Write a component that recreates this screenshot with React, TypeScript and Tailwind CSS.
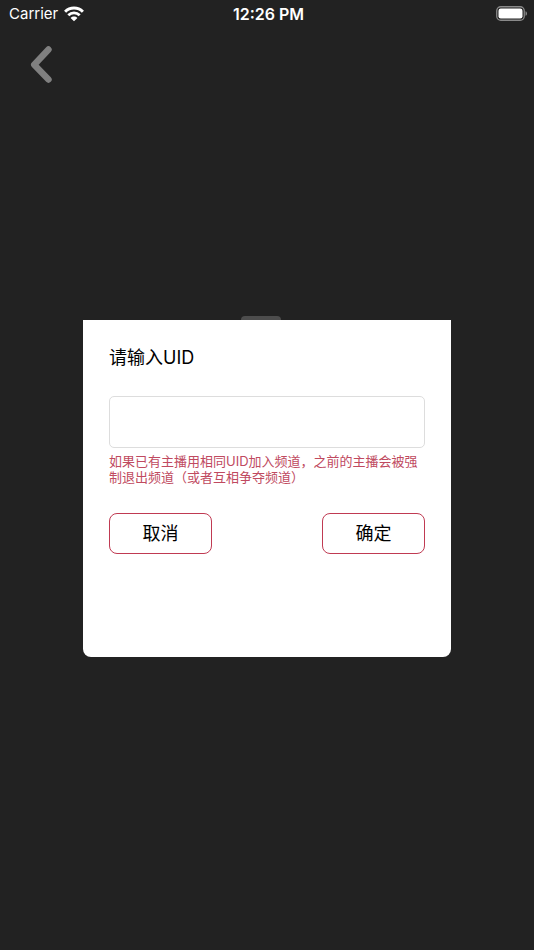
import React from "react";

function WifiIcon() {
  return (
    <svg width="20" height="17" viewBox="0 0 20 17" fill="none" stroke="#fff" aria-hidden="true">
      <path d="M1.100 5.700C6 .9 14 .9 18.900 5.700" strokeWidth="3" />
      <path d="M4.300 9.200c3.200-3.100 8.200-3.100 11.400 0" strokeWidth="2.800" />
      <path d="M10 15.200 6.600 11.900c1.900-1.800 4.900-1.800 6.800 0Z" fill="#fff" stroke="none" />
    </svg>
  );
}

function BatteryIcon() {
  return (
    <svg width="32" height="17" viewBox="0 0 32 17" fill="none" aria-hidden="true">
      <rect x="0.750" y="0.750" width="27.500" height="13.500" rx="4" stroke="#8a8a8a" strokeWidth="1.300" />
      <rect x="2.500" y="2.500" width="24" height="10" rx="2.200" fill="#fff" />
      <path d="M29.500 5.200c2 .6 2 4 0 4.600Z" fill="#8a8a8a" />
    </svg>
  );
}

function StatusBar() {
  return (
    <div className="grid h-7 grid-cols-3 items-center pr-[6px] pl-[9px] text-[15px] leading-5 text-white">
      <div className="flex items-center gap-[6px]">
        <span>Carrier</span>
        <WifiIcon />
      </div>
      <time className="text-center text-base leading-5 font-semibold">12:26 PM</time>
      <div className="flex justify-end">
        <BatteryIcon />
      </div>
    </div>
  );
}

function DialogButton({ children, type }: { children: React.ReactNode; type: "button" | "submit" }) {
  return (
    <button
      type={type}
      className="h-[41px] w-[103px] rounded-lg border border-[#c03a52] bg-white text-lg leading-6 text-black"
    >
      {children}
    </button>
  );
}

export default function App() {
  return (
    <div
      lang="zh-CN"
      className="flex min-h-screen flex-col bg-[#222222] font-[Inter,'Noto_Sans_CJK_SC',sans-serif]"
    >
      <StatusBar />
      <header className="px-[30px] pt-[17px]">
        <button type="button" aria-label="返回" className="block">
          <svg width="23" height="39" viewBox="0 0 23 39" fill="none" aria-hidden="true">
            <path
              d="M18.500 4.500 4.200 19.800 18.500 34.500"
              stroke="#808080"
              strokeWidth="6.400"
              strokeLinecap="round"
              strokeLinejoin="round"
            />
          </svg>
        </button>
      </header>
      <main className="px-[83px] pt-[232px]">
        <div className="flex justify-center pr-3">
          <div className="h-1 w-10 rounded-t-md bg-[#4d4d4d]" />
        </div>
        <form
          role="dialog"
          aria-labelledby="uid-label"
          onSubmit={(event) => event.preventDefault()}
          className="rounded-b-lg bg-white px-[26px] pt-[26px] pb-[103px] text-black"
        >
          <label id="uid-label" htmlFor="uid" className="block text-lg leading-6">
            请输入UID
          </label>
          <input
            id="uid"
            type="text"
            aria-describedby="uid-hint"
            className="mt-[26px] block h-[52px] w-full rounded-[5px] border border-[#dddddd] px-3 text-lg outline-none"
          />
          <p id="uid-hint" className="mt-[5px] text-[13px] leading-4 text-[#c04a60]">
            如果已有主播用相同UID加入频道，之前的主播会被强制退出频道（或者互相争夺频道）
          </p>
          <div className="mt-7 flex justify-between">
            <DialogButton type="button">取消</DialogButton>
            <DialogButton type="submit">确定</DialogButton>
          </div>
        </form>
      </main>
    </div>
  );
}
